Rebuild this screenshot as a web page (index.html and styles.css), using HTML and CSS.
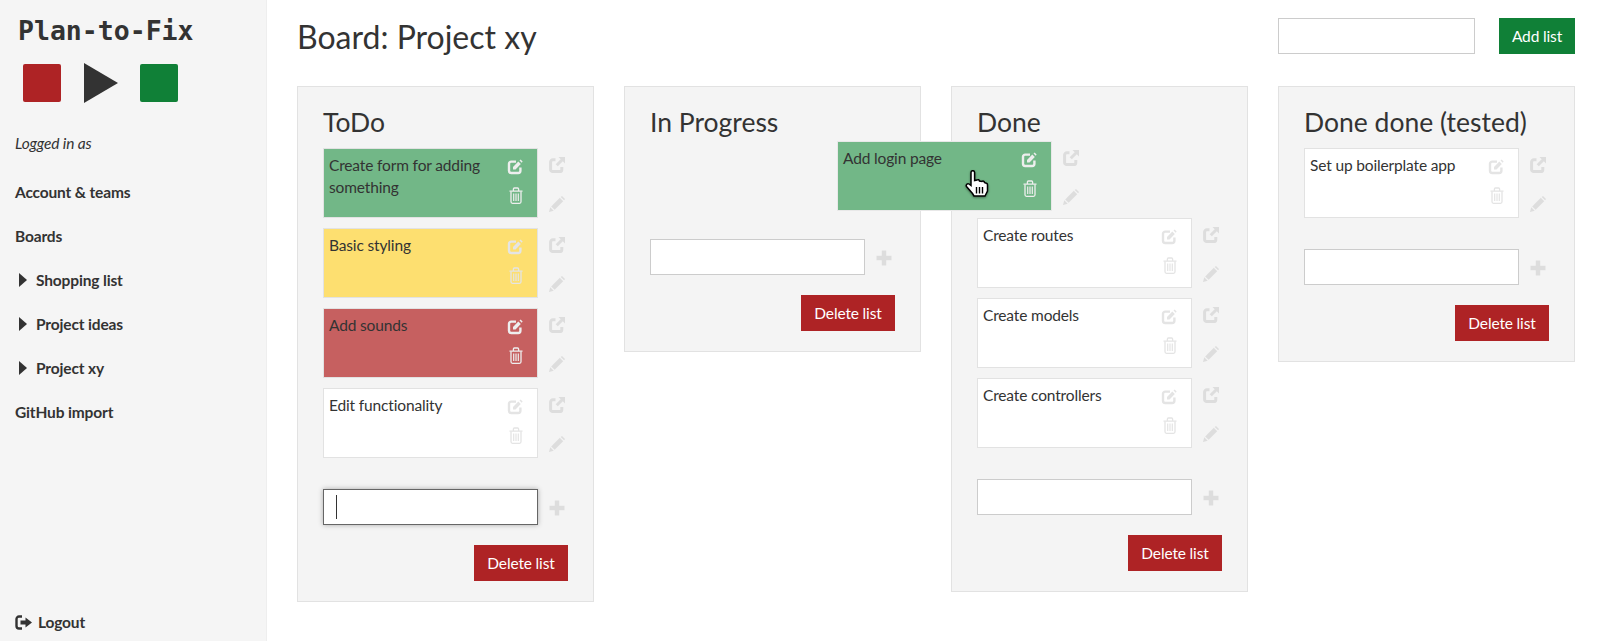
FILE: index.html
```html
<!DOCTYPE html>
<html lang="en">
<head>
    <meta charset="UTF-8">
    <meta name="viewport" content="width=device-width, initial-scale=1.0">
    <title>Plan-to-Fix</title>
    <link rel="stylesheet" href="styles.css">
</head>
<body>
    <svg class="defs" width="0" height="0">
        <symbol id="i-edit" viewBox="0 0 16 16">
            <path d="M9 2.600H4.200A2.200 2.200 0 0 0 2 4.800V11.800A2.200 2.200 0 0 0 4.200 14H11.200A2.200 2.200 0 0 0 13.400 11.800V8.500" fill="none" stroke="currentColor" stroke-width="2.400"/>
            <path d="M6 10.500V7.900L11.300 2.600L13.800 5.100L8.500 10.500Z" fill="currentColor"/>
            <path d="M12.500 1.400L13.600 .6L15.600 2.600L14.700 3.700Z" fill="currentColor"/>
        </symbol>
        <symbol id="i-trash" viewBox="0 0 14 17">
            <path d="M.5 4.200H13.500M4.400 4V2A1 1 0 0 1 5.400 1H8.600A1 1 0 0 1 9.600 2V4" fill="none" stroke="currentColor" stroke-width="1.300"/>
            <path d="M2 4.500V14.800A1.500 1.500 0 0 0 3.500 16.300H10.500A1.500 1.500 0 0 0 12 14.800V4.500" fill="none" stroke="currentColor" stroke-width="1.300"/>
            <path d="M4.700 6.500V14M7 6.500V14M9.300 6.500V14" fill="none" stroke="currentColor" stroke-width="1.200"/>
        </symbol>
        <symbol id="i-share" viewBox="0 0 16 16">
            <path d="M6.500 2.800H3.800A2.200 2.200 0 0 0 1.600 5V12.400A2.200 2.200 0 0 0 3.800 14.600H10.600A2.200 2.200 0 0 0 12.800 12.400V10" fill="none" stroke="currentColor" stroke-width="3"/>
            <path d="M9.500 0H16V6.500L13.800 4.300L8.800 9.300L6.700 7.200L11.700 2.200Z" fill="currentColor"/>
        </symbol>
        <symbol id="i-pencil" viewBox="0 0 16 16">
            <path d="M0 16L1.300 11.300L4.700 14.700Z" fill="currentColor"/>
            <path d="M2.200 10.400L10.800 1.800L14.200 5.200L5.600 13.800Z" fill="currentColor"/>
            <path d="M11.700 .9L13 0L16 3L15.100 4.300Z" fill="currentColor"/>
        </symbol>
        <symbol id="i-plus" viewBox="0 0 16 16">
            <path d="M5.800 .5H10.200V5.800H15.500V10.200H10.200V15.500H5.800V10.200H.5V5.800H5.800Z" fill="currentColor"/>
        </symbol>
    </svg>

    <aside class="sidebar">
        <div class="logo">Plan-to-Fix</div>
        <div class="logo-icons">
            <span class="logo-square logo-red"></span>
            <svg class="logo-play" width="34" height="40" viewBox="0 0 34 40"><path d="M0 0L34 20L0 40Z" fill="#333"/></svg>
            <span class="logo-square logo-green"></span>
        </div>
        <p class="logged-in">Logged in as</p>
        <nav class="nav">
            <a class="nav-item">Account &amp; teams</a>
            <a class="nav-item">Boards</a>
            <a class="nav-item nav-board"><span class="caret"></span>Shopping list</a>
            <a class="nav-item nav-board"><span class="caret"></span>Project ideas</a>
            <a class="nav-item nav-board"><span class="caret"></span>Project xy</a>
            <a class="nav-item">GitHub import</a>
        </nav>
        <a class="logout">
            <svg class="logout-icon" width="18" height="15" viewBox="0 0 18 15">
                <path d="M7 1.500H4A2.500 2.500 0 0 0 1.500 4V11A2.500 2.500 0 0 0 4 13.500H7" fill="none" stroke="#333" stroke-width="2.400"/>
                <path d="M5.500 5.500H10.500V2.500L17 7.500L10.500 12.500V9.500H5.500Z" fill="#333"/>
            </svg>
            Logout
        </a>
    </aside>

    <main class="main">
        <header class="board-head">
            <h1>Board: Project xy</h1>
            <form class="add-list">
                <input class="text-input add-list-input" type="text">
                <button class="btn btn-green" type="button">Add list</button>
            </form>
        </header>

        <section class="lists">
            <div class="list">
                <h2>ToDo</h2>
                <div class="tasks">
                    <div class="task-row">
                        <div class="card card-green"><span class="card-text">Create form for adding something</span><div class="card-icons bright"><svg class="ic-edit"><use href="#i-edit"/></svg><svg class="ic-trash"><use href="#i-trash"/></svg></div></div>
                        <div class="row-icons"><svg class="ic-side"><use href="#i-share"/></svg><svg class="ic-side"><use href="#i-pencil"/></svg></div>
                    </div>
                    <div class="task-row">
                        <div class="card card-yellow"><span class="card-text">Basic styling</span><div class="card-icons"><svg class="ic-edit"><use href="#i-edit"/></svg><svg class="ic-trash"><use href="#i-trash"/></svg></div></div>
                        <div class="row-icons"><svg class="ic-side"><use href="#i-share"/></svg><svg class="ic-side"><use href="#i-pencil"/></svg></div>
                    </div>
                    <div class="task-row">
                        <div class="card card-red"><span class="card-text">Add sounds</span><div class="card-icons bright"><svg class="ic-edit"><use href="#i-edit"/></svg><svg class="ic-trash"><use href="#i-trash"/></svg></div></div>
                        <div class="row-icons"><svg class="ic-side"><use href="#i-share"/></svg><svg class="ic-side"><use href="#i-pencil"/></svg></div>
                    </div>
                    <div class="task-row">
                        <div class="card"><span class="card-text">Edit functionality</span><div class="card-icons"><svg class="ic-edit"><use href="#i-edit"/></svg><svg class="ic-trash"><use href="#i-trash"/></svg></div></div>
                        <div class="row-icons"><svg class="ic-side"><use href="#i-share"/></svg><svg class="ic-side"><use href="#i-pencil"/></svg></div>
                    </div>
                </div>
                <div class="add-task">
                    <div class="text-input focused"><span class="caret-line"></span></div>
                    <svg class="ic-plus"><use href="#i-plus"/></svg>
                </div>
                <div class="list-foot"><button class="btn btn-red" type="button">Delete list</button></div>
            </div>

            <div class="list">
                <h2>In Progress</h2>
                <div class="tasks"></div>
                <div class="add-task">
                    <input class="text-input" type="text">
                    <svg class="ic-plus"><use href="#i-plus"/></svg>
                </div>
                <div class="list-foot"><button class="btn btn-red" type="button">Delete list</button></div>
            </div>

            <div class="list">
                <h2>Done</h2>
                <div class="tasks tasks-gap">
                    <div class="task-row">
                        <div class="card"><span class="card-text">Create routes</span><div class="card-icons"><svg class="ic-edit"><use href="#i-edit"/></svg><svg class="ic-trash"><use href="#i-trash"/></svg></div></div>
                        <div class="row-icons"><svg class="ic-side"><use href="#i-share"/></svg><svg class="ic-side"><use href="#i-pencil"/></svg></div>
                    </div>
                    <div class="task-row">
                        <div class="card"><span class="card-text">Create models</span><div class="card-icons"><svg class="ic-edit"><use href="#i-edit"/></svg><svg class="ic-trash"><use href="#i-trash"/></svg></div></div>
                        <div class="row-icons"><svg class="ic-side"><use href="#i-share"/></svg><svg class="ic-side"><use href="#i-pencil"/></svg></div>
                    </div>
                    <div class="task-row">
                        <div class="card"><span class="card-text">Create controllers</span><div class="card-icons"><svg class="ic-edit"><use href="#i-edit"/></svg><svg class="ic-trash"><use href="#i-trash"/></svg></div></div>
                        <div class="row-icons"><svg class="ic-side"><use href="#i-share"/></svg><svg class="ic-side"><use href="#i-pencil"/></svg></div>
                    </div>
                </div>
                <div class="add-task">
                    <input class="text-input" type="text">
                    <svg class="ic-plus"><use href="#i-plus"/></svg>
                </div>
                <div class="list-foot"><button class="btn btn-red" type="button">Delete list</button></div>
            </div>

            <div class="list">
                <h2>Done done (tested)</h2>
                <div class="tasks">
                    <div class="task-row">
                        <div class="card"><span class="card-text">Set up boilerplate app</span><div class="card-icons"><svg class="ic-edit"><use href="#i-edit"/></svg><svg class="ic-trash"><use href="#i-trash"/></svg></div></div>
                        <div class="row-icons"><svg class="ic-side"><use href="#i-share"/></svg><svg class="ic-side"><use href="#i-pencil"/></svg></div>
                    </div>
                </div>
                <div class="add-task">
                    <input class="text-input" type="text">
                    <svg class="ic-plus"><use href="#i-plus"/></svg>
                </div>
                <div class="list-foot"><button class="btn btn-red" type="button">Delete list</button></div>
            </div>
        </section>
    </main>

    <!-- row being dragged, floats over the lists -->
    <div class="task-row drag-row">
        <div class="card card-green"><span class="card-text">Add login page</span><div class="card-icons bright"><svg class="ic-edit"><use href="#i-edit"/></svg><svg class="ic-trash"><use href="#i-trash"/></svg></div></div>
        <div class="row-icons"><svg class="ic-side"><use href="#i-share"/></svg><svg class="ic-side"><use href="#i-pencil"/></svg></div>
    </div>
    <svg class="hand" width="24" height="28" viewBox="0 0 24 28">
        <path d="M6 2.500A1.800 1.800 0 0 1 9.600 2.500V10.500L12 10A1.600 1.600 0 0 1 14.500 11L17 11.500A1.500 1.500 0 0 1 19.500 12.500L20.500 13A2 2 0 0 1 22.500 15V21L20 26H9L7.500 23.500L1.500 16.500C.5 15 2.500 13 4 14L6 15.500Z" fill="#fff" stroke="#000" stroke-width="1.500"/>
        <path d="M11.500 17V23.500M14.500 17V23.500M17.500 17V23.500" stroke="#000" stroke-width="1.400"/>
    </svg>
</body>
</html>
```

FILE: styles.css
```css
* {
    box-sizing: border-box;
}
html, body {
    height: 100%;
}
body {
    margin: 0;
    display: flex;
    overflow: hidden;
    font-family: Lato, "Noto Sans", sans-serif;
    font-size: 15.5px;
    letter-spacing: -0.15px;
    color: #333;
    background: #fff;
}
.defs {
    position: absolute;
}

/* sidebar */
.sidebar {
    width: 267px;
    flex: none;
    display: flex;
    flex-direction: column;
    padding: 15px 0 0 15px;
    background: #f5f5f5;
    border-right: 1px solid #eee;
}
.logo {
    padding-left: 3px;
    font-family: "DejaVu Sans Mono", monospace;
    font-size: 26.5px;
    font-weight: bold;
    letter-spacing: 0;
    line-height: 32px;
}
.logo-icons {
    display: flex;
    align-items: center;
    gap: 22px;
    margin: 16px 0 0 8px;
}
.logo-square {
    width: 38px;
    height: 38px;
    border-radius: 2px;
}
.logo-red {
    background: #ae2325;
}
.logo-green {
    background: #108037;
}
.logo-play {
    margin-left: 1px;
}
.logged-in {
    margin: 30px 0 29px;
    font-style: italic;
    line-height: 20px;
}
.nav {
    display: flex;
    flex-direction: column;
    gap: 24px;
}
.nav-item {
    display: flex;
    align-items: center;
    height: 20px;
    font-weight: bold;
}
.nav-board {
    padding-left: 4px;
}
.caret {
    width: 0;
    height: 0;
    margin-right: 9px;
    border-top: 7px solid transparent;
    border-bottom: 7px solid transparent;
    border-left: 8px solid #333;
}
.logout {
    display: flex;
    align-items: center;
    gap: 5px;
    margin-top: auto;
    margin-bottom: 9px;
    line-height: 20px;
    font-weight: bold;
}

/* main area */
.main {
    flex: 1;
    padding: 17px 25px 0 30px;
}
.board-head {
    display: flex;
    justify-content: space-between;
    height: 69px;
}
h1 {
    margin: 0;
    font-size: 32px;
    font-weight: normal;
    letter-spacing: 0;
    line-height: 40px;
}
.add-list {
    display: flex;
    gap: 24px;
    padding-top: 1px;
}
.text-input {
    display: block;
    width: 215px;
    height: 36px;
    padding: 0 10px;
    background: #fff;
    border: 1px solid #ccc;
    border-radius: 0;
}
.add-list-input {
    width: 197px;
}
.focused {
    border-color: #666;
    box-shadow: 0 0 5px rgba(0, 0, 0, 0.3);
}
.caret-line {
    display: block;
    width: 1px;
    height: 24px;
    margin: 5px 0 0 2px;
    background: #333;
}
.btn {
    height: 36px;
    padding: 0 12px;
    border: none;
    color: #fff;
    font-family: inherit;
    font-size: inherit;
    letter-spacing: inherit;
}
.btn-green {
    width: 76px;
    padding: 0;
    background: #108037;
}
.btn-red {
    width: 94px;
    padding: 0;
    background: #ae2325;
}

/* lists */
.lists {
    display: flex;
    align-items: flex-start;
    gap: 30px;
}
.list {
    width: 297px;
    flex: none;
    padding: 17px 25px 20px 25px;
    background: #f4f4f4;
    border: 1px solid #e2e2e2;
}
h2 {
    margin: 0 0 8px;
    font-size: 26.5px;
    font-weight: normal;
    letter-spacing: 0;
    line-height: 36px;
}
.tasks {
    display: flex;
    flex-direction: column;
    gap: 10px;
    min-height: 60px;
    margin-bottom: 31px;
}
.tasks-gap {
    padding-top: 70px;
}
.task-row {
    display: flex;
    gap: 11px;
}
.card {
    display: flex;
    justify-content: space-between;
    width: 215px;
    height: 70px;
    flex: none;
    padding: 5px 14px 0 5px;
    background: #fff;
    border: 1px solid #e2e2e2;
    line-height: 22px;
}
.card-text {
    width: 165px;
}
.card-green {
    background: #72b787;
}
.card-yellow {
    background: #fddf70;
}
.card-red {
    background: #c66060;
}
.card-icons {
    display: flex;
    flex-direction: column;
    align-items: flex-end;
    gap: 12px;
    padding-top: 5px;
    color: #e4e4e4;
}
.bright {
    color: #eee;
}
.ic-edit {
    width: 16px;
    height: 16px;
}
.ic-trash {
    width: 14px;
    height: 17px;
}
.row-icons {
    display: flex;
    flex-direction: column;
    gap: 23px;
    padding-top: 9px;
    color: #ddd;
}
.ic-side {
    width: 16px;
    height: 16px;
}
.add-task {
    display: flex;
    align-items: center;
    gap: 11px;
}
.ic-plus {
    width: 16px;
    height: 16px;
    margin-top: 2px;
    color: #ddd;
}
.list-foot {
    display: flex;
    justify-content: flex-end;
    margin-top: 20px;
}

/* dragged row and pointer */
.drag-row {
    position: absolute;
    left: 837px;
    top: 141px;
}
.drag-row .card {
    border-color: #e8e8e8;
}
.hand {
    position: absolute;
    left: 965px;
    top: 170px;
    filter: drop-shadow(0 1px 1px rgba(0, 0, 0, 0.4));
}
```
